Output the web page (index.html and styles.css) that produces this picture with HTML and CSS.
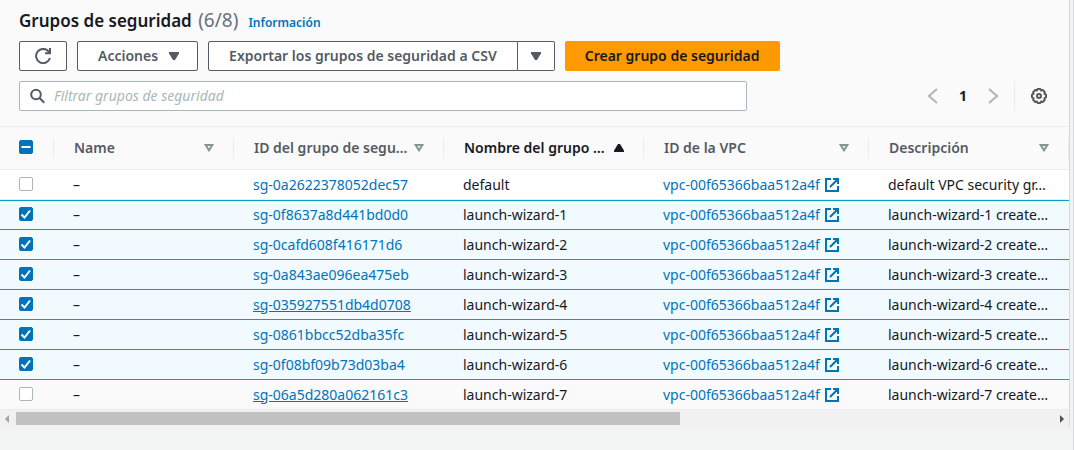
FILE: index.html
```html
<!DOCTYPE html>
<html lang="es">
<head>
<meta charset="utf-8">
<title>Grupos de seguridad</title>
<link rel="stylesheet" href="styles.css">
</head>
<body>
<svg class="sprite" aria-hidden="true">
  <symbol id="external" viewBox="0 0 16 16"><path d="M7 2H2v12h12V9M9 2h5v5M14 2L6 10" fill="none" stroke="currentColor" stroke-width="2"/></symbol>
  <symbol id="sort" viewBox="0 0 10 8"><path d="M1.600 1h6.800L5 6.300z" fill="none" stroke="currentColor" stroke-width="2"/></symbol>
  <symbol id="down" viewBox="0 0 10 8"><path d="M0 0h10v1.500L6 8H4L0 1.500z" fill="currentColor"/></symbol>
</svg>
<main class="page">
  <section class="panel">
    <header class="head">
      <div class="title-row">
        <h1 class="title">Grupos de seguridad <span class="count">(6/8)</span></h1>
        <a class="info" href="#">Información</a>
      </div>
      <div class="buttons">
        <button class="btn btn-icon" aria-label="Actualizar"><svg class="icon" viewBox="0 0 16 16"><path d="M15 10a7.100 7.100 0 1 1-1.500-6.700L15 5M15 0v5.200h-5" fill="none" stroke="currentColor" stroke-width="2"/></svg></button>
        <button class="btn btn-menu">Acciones <svg class="caret"><use href="#down"/></svg></button>
        <div class="split">
          <button class="btn">Exportar los grupos de seguridad a CSV</button>
          <button class="btn btn-more" aria-label="Más opciones"><svg class="caret"><use href="#down"/></svg></button>
        </div>
        <button class="btn btn-primary">Crear grupo de seguridad</button>
      </div>
      <div class="tools">
        <label class="search">
          <svg class="icon" viewBox="0 0 16 16"><circle cx="6" cy="6.500" r="4.800" fill="none" stroke="currentColor" stroke-width="2"/><path d="M9.500 10l4.800 4.800" stroke="currentColor" stroke-width="2"/></svg>
          <input class="search-input" type="text" placeholder="Filtrar grupos de seguridad" aria-label="Filtrar grupos de seguridad">
        </label>
        <nav class="pager" aria-label="Paginación">
          <button class="plain" aria-label="Anterior"><svg class="icon" viewBox="0 0 16 16"><path d="M12 1L4 8l8 7" fill="none" stroke="currentColor" stroke-width="2"/></svg></button>
          <button class="plain current">1</button>
          <button class="plain" aria-label="Siguiente"><svg class="icon" viewBox="0 0 16 16"><path d="M4 1l8 7-8 7" fill="none" stroke="currentColor" stroke-width="2"/></svg></button>
        </nav>
        <div class="settings">
          <button class="plain gear" aria-label="Preferencias"><svg class="icon" viewBox="0 0 16 16"><path d="M6.600 1h2.800l.6 1.500 1.700-.5 2.200 2.200-.5 1.700 1.600.7v2.800l-1.600.7.5 1.700-2.200 2.200-1.700-.5-.6 1.500H6.600L6 13.500l-1.700.5-2.200-2.200.5-1.700L1 9.400V6.600l1.600-.7-.5-1.700L4.300 2l1.700.5z" fill="none" stroke="currentColor" stroke-width="2" stroke-linejoin="round"/><circle cx="8" cy="8" r="2" fill="none" stroke="currentColor" stroke-width="2"/></svg></button>
        </div>
      </div>
    </header>
    <table class="table">
      <colgroup><col class="c-check"><col class="c-name"><col class="c-id"><col class="c-group"><col class="c-vpc"><col></colgroup>
      <thead>
        <tr>
          <th><div class="th check"><input class="box mixed" type="checkbox" aria-label="Seleccionar todo"></div></th>
          <th><div class="th">Name <svg class="caret"><use href="#sort"/></svg></div></th>
          <th><div class="th">ID del grupo de segu… <svg class="caret"><use href="#sort"/></svg></div></th>
          <th><div class="th sorted">Nombre del grupo … <svg class="caret" viewBox="0 0 10 8"><path d="M4 0h2l4 6.500V8H0V6.500z" fill="currentColor"/></svg></div></th>
          <th><div class="th">ID de la VPC <svg class="caret"><use href="#sort"/></svg></div></th>
          <th><div class="th">Descripción <svg class="caret"><use href="#sort"/></svg></div></th>
        </tr>
      </thead>
      <tbody>
        <tr><td class="check"><input class="box" type="checkbox" aria-label="default"></td><td>–</td><td><a href="#">sg-0a2622378052dec57</a></td><td>default</td><td><a class="ext" href="#">vpc-00f65366baa512a4f <svg class="icon"><use href="#external"/></svg></a></td><td>default VPC security gr…</td></tr>
        <tr class="selected first"><td class="check"><input class="box" type="checkbox" checked aria-label="launch-wizard-1"></td><td>–</td><td><a href="#">sg-0f8637a8d441bd0d0</a></td><td>launch-wizard-1</td><td><a class="ext" href="#">vpc-00f65366baa512a4f <svg class="icon"><use href="#external"/></svg></a></td><td>launch-wizard-1 create…</td></tr>
        <tr class="selected"><td class="check"><input class="box" type="checkbox" checked aria-label="launch-wizard-2"></td><td>–</td><td><a href="#">sg-0cafd608f416171d6</a></td><td>launch-wizard-2</td><td><a class="ext" href="#">vpc-00f65366baa512a4f <svg class="icon"><use href="#external"/></svg></a></td><td>launch-wizard-2 create…</td></tr>
        <tr class="selected"><td class="check"><input class="box" type="checkbox" checked aria-label="launch-wizard-3"></td><td>–</td><td><a href="#">sg-0a843ae096ea475eb</a></td><td>launch-wizard-3</td><td><a class="ext" href="#">vpc-00f65366baa512a4f <svg class="icon"><use href="#external"/></svg></a></td><td>launch-wizard-3 create…</td></tr>
        <tr class="selected"><td class="check"><input class="box" type="checkbox" checked aria-label="launch-wizard-4"></td><td>–</td><td><a class="underlined" href="#">sg-035927551db4d0708</a></td><td>launch-wizard-4</td><td><a class="ext" href="#">vpc-00f65366baa512a4f <svg class="icon"><use href="#external"/></svg></a></td><td>launch-wizard-4 create…</td></tr>
        <tr class="selected"><td class="check"><input class="box" type="checkbox" checked aria-label="launch-wizard-5"></td><td>–</td><td><a href="#">sg-0861bbcc52dba35fc</a></td><td>launch-wizard-5</td><td><a class="ext" href="#">vpc-00f65366baa512a4f <svg class="icon"><use href="#external"/></svg></a></td><td>launch-wizard-5 create…</td></tr>
        <tr class="selected"><td class="check"><input class="box" type="checkbox" checked aria-label="launch-wizard-6"></td><td>–</td><td><a href="#">sg-0f08bf09b73d03ba4</a></td><td>launch-wizard-6</td><td><a class="ext" href="#">vpc-00f65366baa512a4f <svg class="icon"><use href="#external"/></svg></a></td><td>launch-wizard-6 create…</td></tr>
        <tr class="hovered"><td class="check"><input class="box" type="checkbox" aria-label="launch-wizard-7"></td><td>–</td><td><a class="underlined" href="#">sg-06a5d280a062161c3</a></td><td>launch-wizard-7</td><td><a class="ext" href="#">vpc-00f65366baa512a4f <svg class="icon"><use href="#external"/></svg></a></td><td>launch-wizard-7 create…</td></tr>
      </tbody>
    </table>
    <div class="scrollbar">
      <svg class="arrow" viewBox="0 0 16 16"><path d="M9 4v8L5 8z" fill="#a3a3a3"/></svg>
      <div class="track"><div class="thumb"></div></div>
      <svg class="arrow" viewBox="0 0 16 16"><path d="M7 4v8l4-4z" fill="#505050"/></svg>
    </div>
  </section>
</main>
</body>
</html>
```
FILE: styles.css
```css
* { box-sizing: border-box; }
body {
  margin: 0;
  background: #f2f3f3;
  color: #16191f;
  font-family: "Noto Sans", "Open Sans", sans-serif;
  font-size: 14px;
  line-height: 20px;
}
button, input { font: inherit; color: inherit; margin: 0; }
a { color: #0073bb; text-decoration: none; }
.sprite { display: none; }
.icon { width: 16px; height: 16px; flex: none; display: block; }
.caret { width: 10px; height: 8px; flex: none; display: block; }

.page { min-height: 100vh; padding-right: 3px; border-right: 1px solid #d5dbdb; }
.panel { background: #fafafa; border-right: 1px solid #d5dbdb; }
.head { display: flex; flex-direction: column; gap: 10px; padding: 9px 22px 15px 19px; }
.title-row { display: flex; align-items: baseline; gap: 10px; height: 22px; }
.title { margin: 0; font-size: 17px; line-height: 22px; font-weight: 600; }
.count { margin-left: 2px; font-weight: 400; color: #687078; font-size: 19px; }
.info { font-size: 12px; font-weight: 600; }

.buttons { display: flex; gap: 10px; }
.btn {
  display: flex;
  align-items: center;
  justify-content: center;
  gap: 11px;
  height: 30px;
  padding: 0 20px;
  border: 1px solid #545b64;
  border-radius: 2px;
  background: #fff;
  color: #545b64;
  font-weight: 600;
  white-space: nowrap;
}
.btn-icon { width: 48px; padding: 0; }
.btn-menu { padding-right: 18px; }
.split { display: flex; }
.split .btn:first-child { border-radius: 2px 0 0 2px; }
.btn-more { width: 37px; padding: 0; border-left: 0; border-radius: 0 2px 2px 0; }
.btn-primary { padding: 0 19px; background: #ff9900; border-color: #ff9900; color: #16191f; }

.tools { display: flex; align-items: center; }
.search {
  display: flex;
  align-items: center;
  gap: 8px;
  flex: 1;
  max-width: 728px;
  height: 30px;
  padding: 0 10px;
  border: 1px solid #aab7b8;
  border-radius: 2px;
  background: #fff;
  color: #545b64;
}
.search-input { flex: 1; min-width: 0; padding: 0; border: 0; outline: 0; background: none; }
.search-input::placeholder { color: #aab7b8; font-style: italic; opacity: 1; }
.plain { display: flex; align-items: center; justify-content: center; padding: 0; border: 0; background: none; color: #aab7b8; }
.pager { display: flex; margin-left: auto; gap: 14px; }
.current { width: 16px; color: #16191f; font-weight: 700; }
.settings { display: flex; align-items: center; height: 30px; margin-left: 13px; padding-left: 16px; border-left: 1px solid #eaeded; }
.gear { color: #545b64; }

.table { width: 100%; table-layout: fixed; border-collapse: separate; border-spacing: 0; }
.c-check { width: 54px; }
.c-name { width: 180px; }
.c-id { width: 210px; }
.c-group { width: 200px; }
.c-vpc { width: 225px; }
th { height: 44px; padding: 0; border: solid #eaeded; border-width: 1px 0; text-align: left; color: #545b64; font-weight: 600; }
.th { display: flex; align-items: center; justify-content: space-between; height: 21px; padding: 0 19px 0 20px; border-right: 1px solid #eaeded; white-space: nowrap; }
th .check { align-items: flex-start; padding: 2px 0 0 19px; }
.th .caret { color: #879596; }
.sorted, .sorted .caret { color: #16191f; }
td { height: 30px; padding: 0 0 0 19px; border-bottom: 1px solid #eaeded; background: #fff; white-space: nowrap; overflow: hidden; }
.selected td { background: #f1faff; border-bottom-color: #00a1c9; }
.first td { box-shadow: inset 0 1px #00a1c9; }
.hovered td { background: #fafafa; }
.ext { display: flex; align-items: center; gap: 4px; }
.underlined { text-decoration: underline; }

.box {
  display: block;
  width: 14px;
  height: 14px;
  appearance: none;
  border: 1px solid #aab7b8;
  border-radius: 2px;
  background: #fff center / 14px 14px no-repeat;
}
td .box { margin-bottom: 1px; }
.box:checked, .mixed { border-color: #0073bb; background-color: #0073bb; }
.box:checked { background-image: url("data:image/svg+xml,%3Csvg xmlns='http://www.w3.org/2000/svg' viewBox='0 0 14 14'%3E%3Cpath d='M2.500 7.500l3 3 5.500-7' fill='none' stroke='white' stroke-width='2'/%3E%3C/svg%3E"); }
.mixed { background-image: url("data:image/svg+xml,%3Csvg xmlns='http://www.w3.org/2000/svg' viewBox='0 0 14 14'%3E%3Cpath d='M2.500 7h9' stroke='white' stroke-width='2'/%3E%3C/svg%3E"); }

.scrollbar { display: flex; height: 17px; background: #f1f1f1; align-items: center; }
.arrow { width: 16px; height: 16px; flex: none; }
.track { flex: 1; }
.thumb { width: 64%; height: 13px; background: #c1c1c1; }
```
